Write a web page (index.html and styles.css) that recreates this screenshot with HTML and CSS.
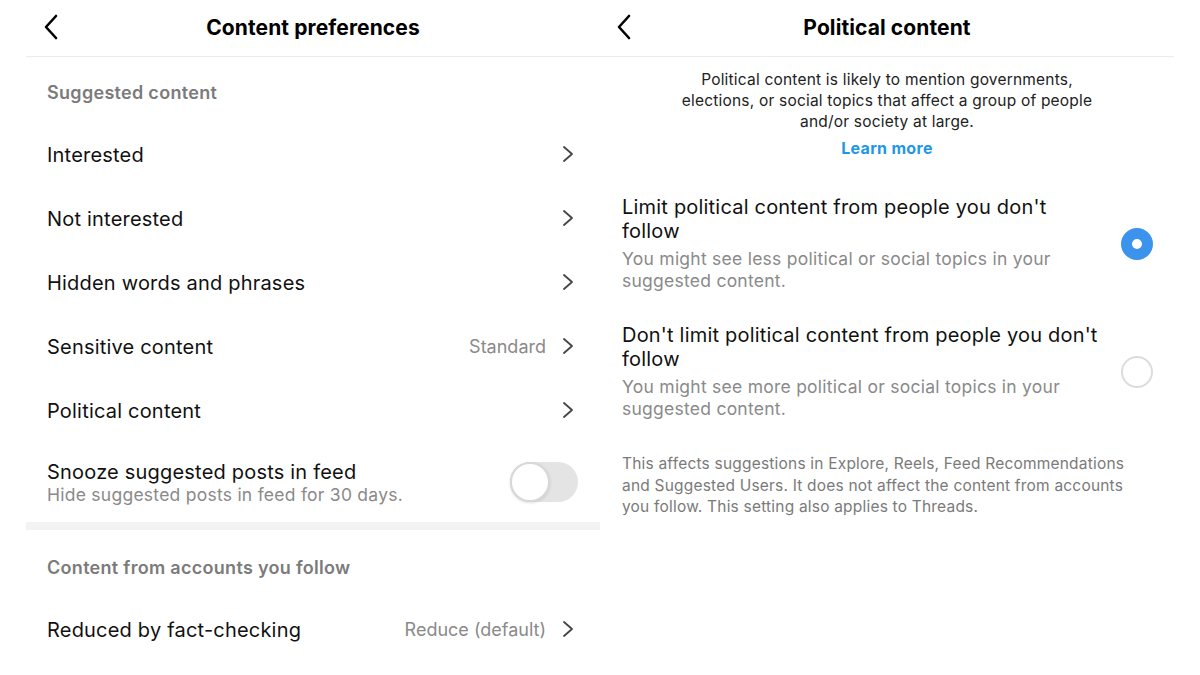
FILE: index.html
```html
<!DOCTYPE html>
<html lang="en">
<head>
<meta charset="utf-8">
<title>Content preferences</title>
<link rel="stylesheet" href="styles.css">
</head>
<body>
<div class="screen">
  <section class="panel panel-left">
    <header class="topbar">
      <svg class="back" viewBox="0 0 16 26" width="16" height="26"><path d="M13 2 L3 13 L13 24" fill="none" stroke="#000" stroke-width="2.6" stroke-linecap="round" stroke-linejoin="round"/></svg>
      <h1 class="title">Content preferences</h1>
    </header>
    <div class="section-head first">Suggested content</div>
    <div class="row"><span class="label">Interested</span><span class="right"><svg class="chev" viewBox="0 0 12 18" width="12" height="18"><path d="M2 2 L10 9 L2 16" fill="none" stroke="#444" stroke-width="1.8" stroke-linecap="round" stroke-linejoin="round"/></svg></span></div>
    <div class="row"><span class="label">Not interested</span><span class="right"><svg class="chev" viewBox="0 0 12 18" width="12" height="18"><path d="M2 2 L10 9 L2 16" fill="none" stroke="#444" stroke-width="1.8" stroke-linecap="round" stroke-linejoin="round"/></svg></span></div>
    <div class="row"><span class="label">Hidden words and phrases</span><span class="right"><svg class="chev" viewBox="0 0 12 18" width="12" height="18"><path d="M2 2 L10 9 L2 16" fill="none" stroke="#444" stroke-width="1.8" stroke-linecap="round" stroke-linejoin="round"/></svg></span></div>
    <div class="row"><span class="label">Sensitive content</span><span class="right"><span class="value">Standard</span><svg class="chev" viewBox="0 0 12 18" width="12" height="18"><path d="M2 2 L10 9 L2 16" fill="none" stroke="#444" stroke-width="1.8" stroke-linecap="round" stroke-linejoin="round"/></svg></span></div>
    <div class="row"><span class="label">Political content</span><span class="right"><svg class="chev" viewBox="0 0 12 18" width="12" height="18"><path d="M2 2 L10 9 L2 16" fill="none" stroke="#444" stroke-width="1.8" stroke-linecap="round" stroke-linejoin="round"/></svg></span></div>
    <div class="row row-tall">
      <div class="stack">
        <span class="label">Snooze suggested posts in feed</span>
        <span class="sub">Hide suggested posts in feed for 30 days.</span>
      </div>
      <span class="toggle"><span class="knob"></span></span>
    </div>
    <div class="band"></div>
    <div class="section-head second">Content from accounts you follow</div>
    <div class="row"><span class="label">Reduced by fact-checking</span><span class="right"><span class="value">Reduce (default)</span><svg class="chev" viewBox="0 0 12 18" width="12" height="18"><path d="M2 2 L10 9 L2 16" fill="none" stroke="#444" stroke-width="1.8" stroke-linecap="round" stroke-linejoin="round"/></svg></span></div>
  </section>

  <section class="panel panel-right">
    <header class="topbar">
      <svg class="back" viewBox="0 0 16 26" width="16" height="26"><path d="M13 2 L3 13 L13 24" fill="none" stroke="#000" stroke-width="2.6" stroke-linecap="round" stroke-linejoin="round"/></svg>
      <h1 class="title">Political content</h1>
    </header>
    <p class="intro">Political content is likely to mention governments,<br>elections, or social topics that affect a group of people<br>and/or society at large.</p>
    <a class="learn">Learn more</a>
    <div class="option first-opt">
      <div class="opt-text">
        <div class="opt-title">Limit political content from people you don't<br>follow</div>
        <div class="opt-sub">You might see less political or social topics in your<br>suggested content.</div>
      </div>
      <span class="radio on"></span>
    </div>
    <div class="option">
      <div class="opt-text">
        <div class="opt-title">Don't limit political content from people you don't<br>follow</div>
        <div class="opt-sub">You might see more political or social topics in your<br>suggested content.</div>
      </div>
      <span class="radio"></span>
    </div>
    <p class="foot">This affects suggestions in Explore, Reels, Feed Recommendations<br>and Suggested Users. It does not affect the content from accounts<br>you follow. This setting also applies to Threads.</p>
  </section>
</div>
</body>
</html>
```

FILE: styles.css
```css
* { box-sizing: border-box; }
html, body { margin: 0; padding: 0; background: #fff; }
body {
  width: 1200px;
  height: 675px;
  overflow: hidden;
  font-family: Inter, "Liberation Sans", Arial, sans-serif;
  color: #111;
}
.screen {
  display: flex;
  padding-left: 26px;
}
.panel { width: 574px; }
.topbar {
  height: 57px;
  border-bottom: 1px solid #ececec;
  display: flex;
  align-items: center;
  justify-content: center;
  position: relative;
}
.back { position: absolute; top: 14px; }
.panel-left .back { left: 17px; }
.panel-right .back { left: 16px; }
.title {
  margin: 0;
  font-size: 21px;
  font-weight: 700;
  color: #000;
  margin-top: -2px;
  letter-spacing: 0.1px;
}
.section-head {
  font-size: 18px;
  font-weight: 600;
  color: #7b7b7b;
  line-height: 22px;
  letter-spacing: 0.3px;
  padding: 25px 21px 18px;
}
.section-head.second { padding-top: 27px; }
.row {
  height: 64px;
  display: flex;
  align-items: center;
  justify-content: space-between;
  padding: 0 26px 0 21px;
}
.row-tall { height: 80px; padding-right: 22px; }
.label { font-size: 20px; letter-spacing: 0.2px; color: #111; line-height: 24px; padding-top: 1px; }
.stack { display: flex; flex-direction: column; }
.sub { font-size: 17.5px; letter-spacing: 0.25px; color: #8a8a8a; line-height: 22px; }
.right { display: flex; align-items: center; gap: 16px; }
.value { font-size: 18px; color: #8a8a8a; }
.chev { display: block; }
.toggle {
  width: 68px;
  height: 40px;
  border-radius: 20px;
  background: #e4e4e4;
  position: relative;
}
.knob {
  position: absolute;
  left: 0;
  top: 0;
  width: 40px;
  height: 40px;
  border-radius: 50%;
  background: #fff;
  border: 2px solid #d8d8d8;
  box-shadow: 0 1px 3px rgba(0,0,0,0.12);
}
.band { height: 8px; background: #f3f3f3; }

.intro {
  margin: 0;
  padding-top: 12px;
  text-align: center;
  font-size: 15.5px;
  letter-spacing: 0.2px;
  line-height: 21px;
  color: #222;
}
.learn {
  display: block;
  text-align: center;
  font-size: 16px;
  letter-spacing: 0.3px;
  font-weight: 700;
  color: #1f97e6;
  line-height: 20px;
  margin-top: 6px;
}
.option {
  display: flex;
  align-items: center;
  justify-content: space-between;
  padding: 0 21px 0 22px;
  margin-top: 31px;
}
.option.first-opt { margin-top: 37px; }
.opt-title { font-size: 20px; letter-spacing: 0.2px; line-height: 24px; color: #111; }
.opt-sub { font-size: 17.5px; letter-spacing: 0.25px; line-height: 22px; color: #8a8a8a; margin-top: 5px; }
.radio {
  width: 32px;
  height: 32px;
  border-radius: 50%;
  border: 2px solid #dcdcdc;
  flex: none;
}
.radio.on {
  border: 11.5px solid #3b93ec;
  background: #fff;
}
.foot {
  margin: 33px 0 0;
  padding: 0 22px;
  font-size: 15.5px;
  letter-spacing: 0.2px;
  line-height: 21.5px;
  color: #7a7a7a;
}
```
